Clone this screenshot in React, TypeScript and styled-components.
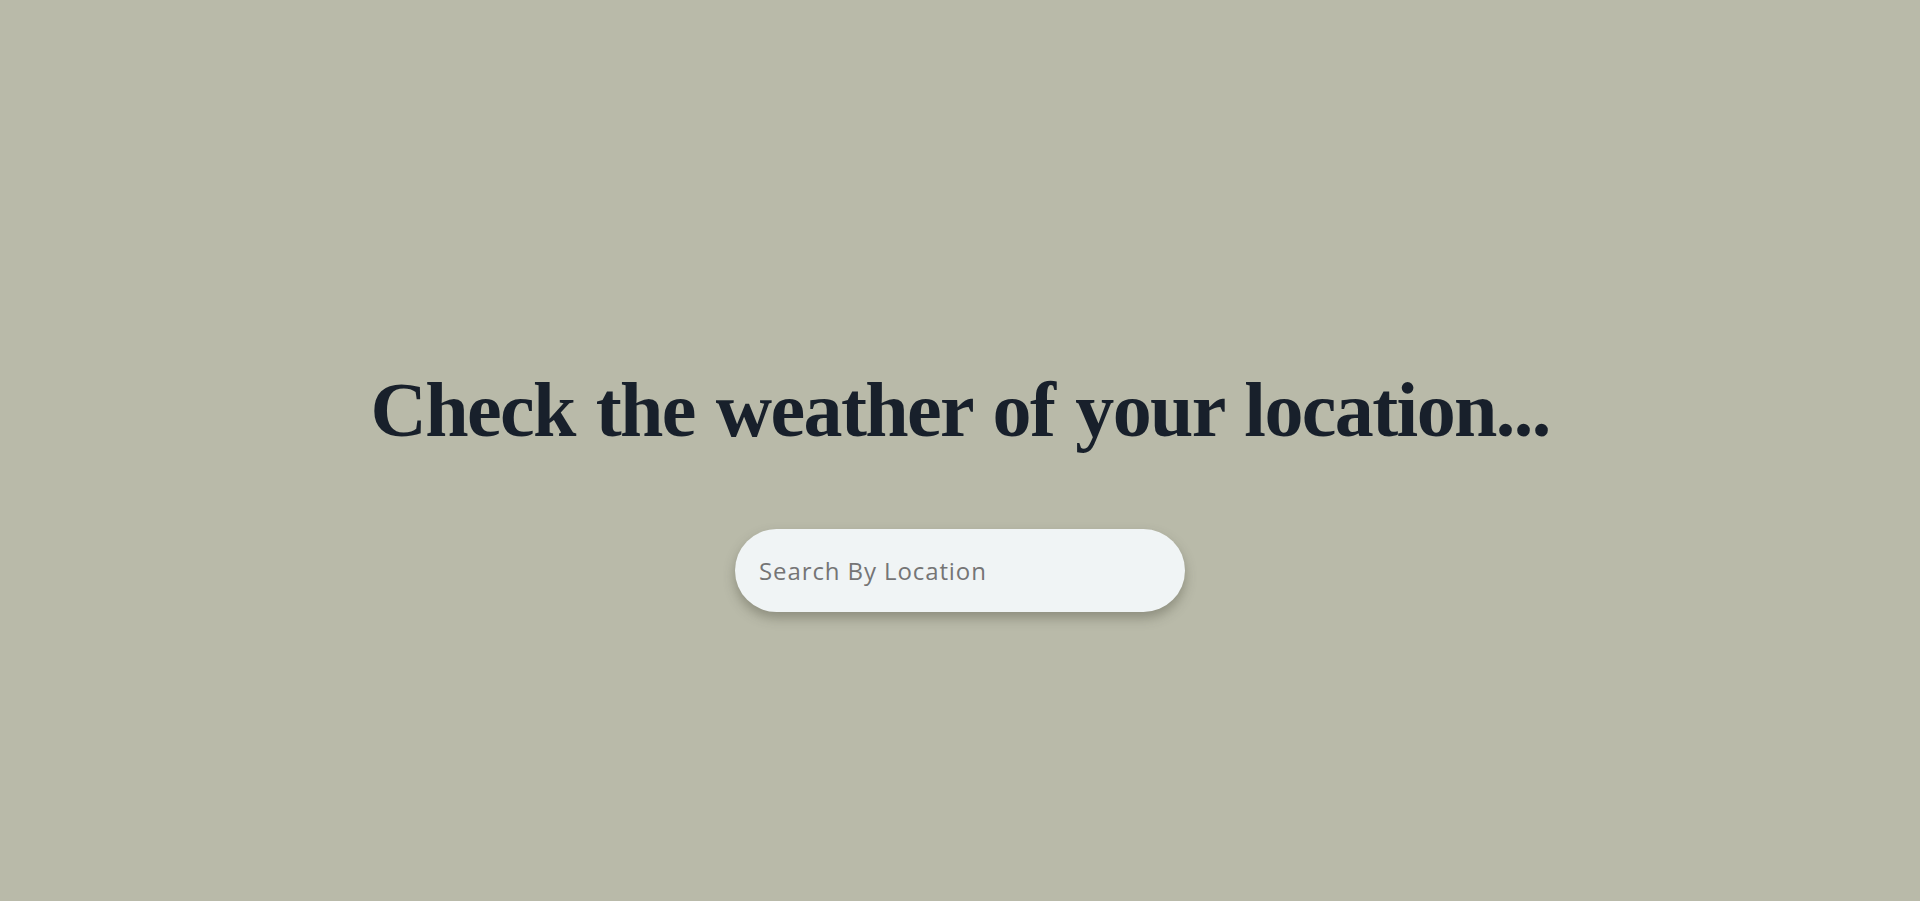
import styled, { createGlobalStyle } from "styled-components";

const GlobalStyle = createGlobalStyle`
  * {
    box-sizing: border-box;
  }
  body {
    margin: 0;
    background: #b9baa9;
  }
`;

const Page = styled.main`
  min-height: 100vh;
  display: flex;
  flex-direction: column;
  align-items: center;
  justify-content: center;
  padding-top: 76px;
`;

const Title = styled.h1`
  margin: 0 0 74px;
  font-family: "Liberation Serif", "Times New Roman", serif;
  font-size: 78px;
  font-weight: 700;
  letter-spacing: -1.6px;
  word-spacing: 3px;
  line-height: 1.15;
  color: #18202b;
  text-align: center;
`;

const SearchInput = styled.input`
  width: 450px;
  height: 83px;
  padding: 0 24px;
  border: none;
  outline: none;
  border-radius: 42px;
  background: #f0f4f5;
  box-shadow: 0 6px 12px rgba(60, 60, 45, 0.35);
  font-family: "Open Sans", sans-serif;
  font-size: 24px;
  letter-spacing: 0.9px;
  color: #333;

  ::placeholder {
    color: #716f6c;
  }
`;

const App = (): JSX.Element => {
  return (
    <Page>
      <GlobalStyle />
      <Title>Check the weather of your location...</Title>
      <SearchInput type="text" placeholder="Search By Location" />
    </Page>
  );
};

export default App;
